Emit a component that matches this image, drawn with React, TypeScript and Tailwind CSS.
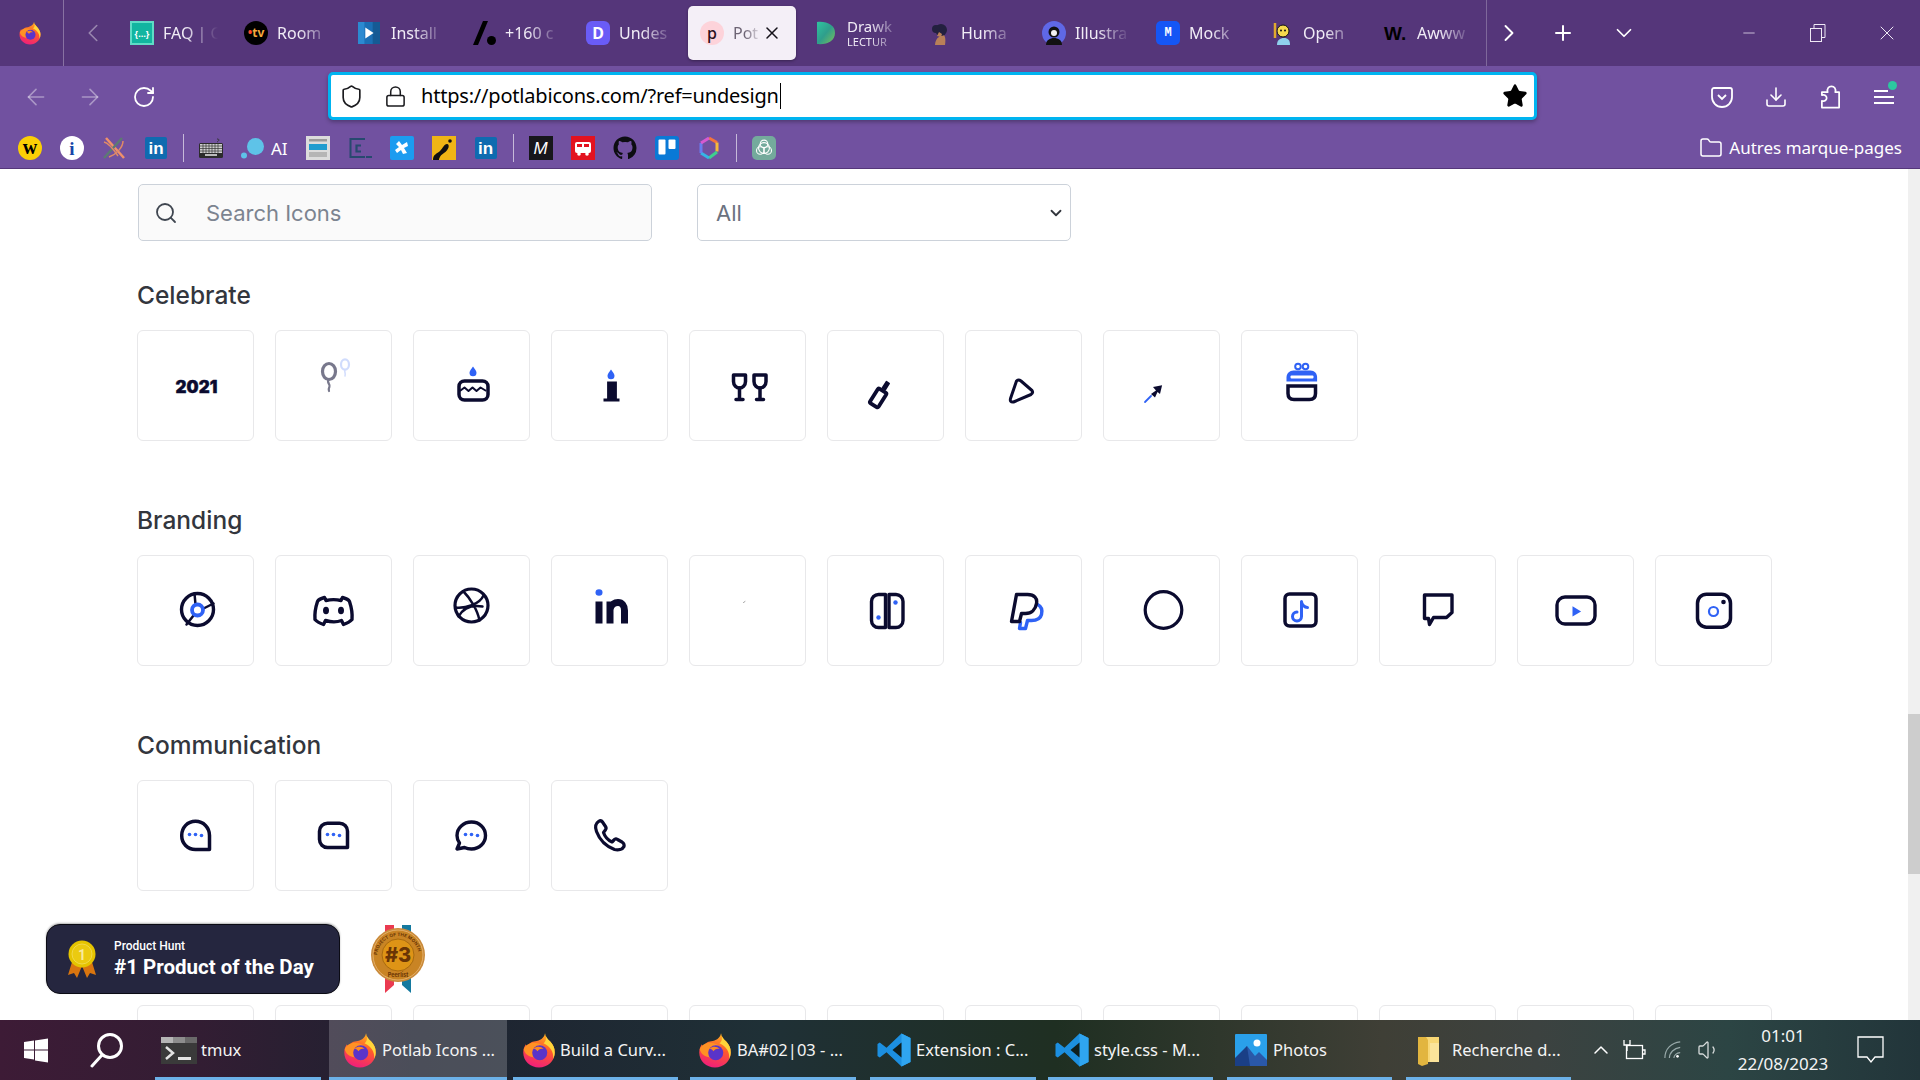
import React from "react";
import { ArrowLeft, ArrowRight, RotateCw, Shield, Lock, Star, Download, Folder, Search, ChevronLeft, ChevronRight, ChevronDown, ChevronUp, Plus, Minus, X, Volume1 } from "lucide-react";

const N = "#0b0b2f";
const B = "#2f62f5";

function Ff({ className }: { className: string }) {
  return (
    <svg viewBox="0 0 24 24" className={className}>
      <path d="M16 .8c.3 2.6 1.7 3.7 3.5 5.6 2 2.2 3 4.5 3 7.2 0 5.6-4.7 10-10.5 10S1.500 19.200 1.500 13.600c0-2 .6-3.900 1.700-5.500.2 1 .6 1.700 1.200 2.200C5 7.500 7 6.500 9.500 6.200 12.500 5.800 15.500 4 16 .8z" fill="url(#ffg)" />
      <path d="M16 .8c.3 2.600 1.700 3.700 3.500 5.600 2 2.200 3 4.500 3 7.200 0 1.500-.4 3-1 4.200.3-4.600-2-8.300-6.500-10.300C17 6 17 3.500 16 .8z" fill="#ffd53a" />
      <path d="M1.800 11.500C3 8.500 6 7 9 7.200c3 .2 5.500 1.500 7 3.300-3-1.200-5.500-.8-7 .5-1.600 1.500-1.700 4-.3 6C5 16.500 2.500 14.500 1.800 11.500z" fill="#ff9124" />
      <circle cx="12.500" cy="13.800" r="5" fill="#5a34c9" />
      <path d="M8.500 11c2-1.700 5-1.500 6.600.4-2-.5-3.400.2-4 1.500-.7-.9-1.600-1.600-2.600-1.900z" fill="#ff8a1e" />
    </svg>
  );
}

function Vs({ className }: { className: string }) {
  return (
    <svg viewBox="0 0 24 24" className={className}>
      <path d="M17 1l6 3v16l-6 3L7 13.500 2.500 17 1 16V8l1.500-1L7 10.500z" fill="#1c8fe0" />
      <path d="M17 1l6 3v16l-6 3z" fill="#2fa5f0" />
      <path d="M17 7l-6 5 6 5z" fill="#0f1f1f" />
    </svg>
  );
}

function Fav({ k }: { k: string }) {
  const cls = "w-6 h-6 shrink-0";
  if (k === "faq")
    return <div className="w-6 h-6 shrink-0 bg-[#12b5a0] border-2 border-[#5fdcc6] flex items-center justify-center text-white text-[9px] leading-none font-bold">{"{…}"}</div>;
  if (k === "tv")
    return (
      <div className="w-6 h-6 shrink-0 rounded-full bg-black flex items-center justify-center text-[12px] leading-none font-bold">
        <span className="text-[#ff4b2b]">•</span>
        <span className="text-[#f5a93c]">tv</span>
      </div>
    );
  if (k === "install")
    return (
      <svg viewBox="0 0 24 24" className="w-[22px] h-[22px] shrink-0 mr-[2px]">
        <rect width="24" height="24" fill="#1b6fb5" />
        <rect x="16" width="8" height="24" fill="#155a94" />
        <rect y="0" width="7" height="24" fill="#2b8ad1" />
        <path d="M8 6l9 6-9 6z" fill="#fff" />
      </svg>
    );
  if (k === "slash")
    return (
      <svg viewBox="0 0 24 24" className={cls}>
        <path d="M11 0h5L6 24H1z" fill="#000" />
        <circle cx="19.500" cy="19.500" r="4.500" fill="#000" />
      </svg>
    );
  if (k === "d")
    return <div className="w-6 h-6 shrink-0 rounded-[6px] bg-[#6a5cf6] flex items-center justify-center text-white text-[16px] leading-none font-bold">D</div>;
  if (k === "p")
    return <div className="w-6 h-6 shrink-0 rounded-full bg-[#fdd3da] flex items-center justify-center text-[#2a1020] text-[16px] leading-none font-medium">p</div>;
  if (k === "draw")
    return (
      <svg viewBox="0 0 24 24" className={cls}>
        <path d="M3 1c10-1 18 3 18 11s-8 12-18 11z" fill="url(#drawg)" />
      </svg>
    );
  if (k === "human")
    return (
      <svg viewBox="0 0 24 24" className={cls}>
        <path d="M14 13c3 1 4 4 3 11H7c0-4 2-7 4-8z" fill="#b98058" />
        <circle cx="13" cy="9" r="6" fill="#23203f" />
        <circle cx="8" cy="8" r="4" fill="#23203f" />
        <path d="M9 15l2-4 3 2-1 3z" fill="#b98058" />
      </svg>
    );
  if (k === "illu")
    return (
      <svg viewBox="0 0 24 24" className={cls}>
        <circle cx="12" cy="12" r="12" fill="#5f68e6" />
        <path d="M4 24c0-5 4-7 8-7s8 2 8 7z" fill="#111" />
        <circle cx="12" cy="11" r="5.500" fill="#111" />
        <circle cx="12" cy="12" r="3" fill="#f2f2f2" />
      </svg>
    );
  if (k === "mock")
    return <div className="w-6 h-6 shrink-0 rounded-[5px] bg-[#1556f5] flex items-center justify-center text-white text-[12px] leading-none font-bold font-['Liberation_Mono',monospace]">M</div>;
  if (k === "open")
    return (
      <svg viewBox="0 0 24 24" className={cls}>
        <path d="M7 24c0-5 3-7 7-7s6 2 6 7z" fill="#8fd0ec" />
        <circle cx="13" cy="10" r="6" fill="#f5d94e" stroke="#111" strokeWidth="1" />
        <path d="M5 2v15" stroke="#e0a92e" strokeWidth="2.500" />
        <circle cx="11" cy="9.500" r="1" fill="#111" />
        <circle cx="15" cy="9.500" r="1" fill="#111" />
      </svg>
    );
  return <div className="w-6 h-6 shrink-0 flex items-center text-black text-[19px] leading-none font-black font-['Liberation_Sans',sans-serif]">W.</div>;
}

const tabs = [
  { k: "faq", t: "FAQ | C" },
  { k: "tv", t: "Room" },
  { k: "install", t: "Install" },
  { k: "slash", t: "+160 c" },
  { k: "d", t: "Undes" },
  { k: "p", t: "Pot", active: true },
  { k: "draw", t: "Drawk", sub: "LECTUR" },
  { k: "human", t: "Huma" },
  { k: "illu", t: "Illustra" },
  { k: "mock", t: "Mock" },
  { k: "open", t: "Open" },
  { k: "w", t: "Awww" },
];

function Tab({ k, t, sub, active }: { k: string; t: string; sub?: string; active?: boolean }) {
  return (
    <div className="w-[114px] shrink-0 h-full py-[6px] pr-[6px]">
      <div className={`h-full rounded-[5px] pl-3 flex items-center gap-[9px] ${active ? "pr-[14px] bg-[#f4eff7] shadow-[0_1px_3px_rgba(0,0,0,0.35)]" : "pr-[8px]"}`}>
        <Fav k={k} />
        <div className={`flex-1 min-w-0 whitespace-nowrap [mask-image:linear-gradient(to_right,black_40%,transparent)] ${active ? "text-[#6d6474]" : "text-[#f1ecf6]"}`}>
          <div className={`${sub ? "text-[15px] leading-[17px]" : "text-[16px] leading-5"}`}>{t}</div>
          {sub && <div className="text-[11px] leading-[14px]">{sub}</div>}
        </div>
        {active && <X className="w-[20px] h-[20px] shrink-0 ml-[-9px] text-[#15121a]" strokeWidth={1.8} />}
      </div>
    </div>
  );
}

function BM({ k }: { k: string }) {
  const c = "w-6 h-6 shrink-0";
  switch (k) {
    case "wf":
      return <div className="w-6 h-6 shrink-0 rounded-full bg-[#fbcf05] flex items-center justify-center text-black text-[20px] leading-none font-black font-['Liberation_Serif',serif] pb-[3px]">w</div>;
    case "info":
      return <div className="w-6 h-6 shrink-0 rounded-full bg-white flex items-center justify-center text-[#1746a8] text-[19px] leading-none font-bold font-['Liberation_Serif',serif]">i</div>;
    case "x":
      return (
        <svg viewBox="0 0 24 24" className={c} fill="none">
          <path d="M4 2l18 20" stroke="#f0916a" strokeWidth="2.500" />
          <path d="M20 2L2 22" stroke="#5c7a73" strokeWidth="2.500" />
          <path d="M2 6c5 1 10 8 14 14M21 5c0 6-6 13-14 16" stroke="#e08a66" strokeWidth="1.500" />
        </svg>
      );
    case "in":
      return <div className="w-[22px] h-[22px] shrink-0 mx-px rounded-[2px] bg-[#0f6bb0] flex items-center justify-center text-white text-[17px] leading-none font-bold font-['Liberation_Sans',sans-serif]">in</div>;
    case "kbd":
      return (
        <svg viewBox="0 0 24 24" className={c}>
          <path d="M18 6c2-1 3-3 0-3" stroke="#333" strokeWidth="1" fill="none" />
          <rect y="7" width="24" height="15" rx="1.500" fill="#2c2c2c" />
          <rect x="1" y="8" width="22" height="9" fill="#cfcfcf" />
          <path d="M1 10h22M1 12.500h22M1 15h22M4 8v9M7 8v9M10 8v9M13 8v9M16 8v9M19 8v9" stroke="#333" strokeWidth=".7" />
          <rect x="6" y="18" width="12" height="2" fill="#bbb" />
        </svg>
      );
    case "ai":
      return (
        <div className="flex items-center gap-[6px] text-white text-[17px] leading-none">
          <svg viewBox="0 0 24 24" className={c}>
            <circle cx="14.500" cy="10.500" r="8.500" fill="#5ec3e8" />
            <circle cx="3" cy="19.500" r="3" fill="#5ec3e8" />
          </svg>
          <span>AI</span>
        </div>
      );
    case "news":
      return (
        <svg viewBox="0 0 24 24" className={c}>
          <rect width="24" height="24" fill="#dcdcdc" />
          <rect x="3" y="3" width="18" height="2.500" fill="#9a9a9a" />
          <rect x="3" y="8" width="18" height="6" fill="#1f9ccf" />
          <rect x="3" y="16" width="18" height="5" fill="#b5b5b5" />
        </svg>
      );
    case "c":
      return (
        <svg viewBox="0 0 24 24" className={c} fill="none">
          <path d="M17 3H2.500v18H17" stroke="#27496f" strokeWidth="2" />
          <path d="M13 9.500H8.500v6H13" stroke="#27496f" strokeWidth="2.200" />
          <path d="M18 21h6" stroke="#27496f" strokeWidth="2" />
        </svg>
      );
    case "conf":
      return (
        <svg viewBox="0 0 24 24" className={c}>
          <rect width="24" height="24" rx="2" fill="#1c9cf0" />
          <path d="M9 5l3 4 5-3 1 4-4 2 3 5-4 1-2-4-4 3-2-3 4-3-3-3z" fill="#fff" />
        </svg>
      );
    case "yel":
      return (
        <svg viewBox="0 0 24 24" className={c}>
          <rect width="24" height="24" fill="#f0b515" />
          <path d="M1 24c0-6 4-6 7-9s4-7 7-7 2 6-3 9-5 7-5 7z" fill="#111" />
          <circle cx="18" cy="5" r="1.800" fill="#111" />
        </svg>
      );
    case "m":
      return <div className="w-6 h-6 shrink-0 bg-[#17171c] flex items-center justify-center text-white text-[17px] leading-none italic font-['Liberation_Sans',sans-serif]">M</div>;
    case "bus":
      return (
        <svg viewBox="0 0 24 24" className={c}>
          <rect width="24" height="24" fill="#e3121f" />
          <rect x="4" y="6" width="16" height="11" rx="2" fill="#fff" />
          <rect x="6" y="8" width="5" height="3" fill="#e3121f" />
          <rect x="13" y="8" width="5" height="3" fill="#e3121f" />
          <circle cx="8" cy="18" r="1.800" fill="#fff" />
          <circle cx="16" cy="18" r="1.800" fill="#fff" />
        </svg>
      );
    case "gh":
      return (
        <svg viewBox="0 0 24 24" className={c}>
          <path fill="#0d0d12" d="M12 .5C5.600.5.500 5.600.500 12c0 5.100 3.300 9.400 7.900 10.900.6.100.8-.3.800-.6v-2c-3.200.7-3.900-1.500-3.900-1.500-.5-1.300-1.300-1.700-1.300-1.700-1-.7.100-.7.100-.7 1.200.1 1.800 1.200 1.800 1.200 1 1.800 2.700 1.300 3.400 1 .1-.8.400-1.300.7-1.600-2.600-.3-5.300-1.300-5.300-5.700 0-1.300.5-2.300 1.200-3.100-.1-.3-.5-1.500.1-3.100 0 0 1-.3 3.200 1.200a11 11 0 015.800 0c2.200-1.500 3.200-1.200 3.200-1.200.6 1.600.2 2.800.1 3.100.7.800 1.200 1.800 1.200 3.100 0 4.400-2.700 5.400-5.300 5.700.4.400.8 1.100.8 2.200v3.300c0 .3.200.7.800.6A11.500 11.500 0 0023.500 12C23.500 5.600 18.400.5 12 .5z" />
        </svg>
      );
    case "trello":
      return (
        <svg viewBox="0 0 24 24" className={c}>
          <rect width="24" height="24" rx="3" fill="#0a79d6" />
          <rect x="3.500" y="3.500" width="7" height="15" rx="1" fill="#fff" />
          <rect x="13.500" y="3.500" width="7" height="9.500" rx="1" fill="#fff" />
        </svg>
      );
    case "hex":
      return (
        <svg viewBox="0 0 24 24" className={c} fill="none" strokeWidth="3">
          <path d="M12 2l8 4.500" stroke="#f4743b" />
          <path d="M20 6.500v9" stroke="#f6b93b" />
          <path d="M20 16l-8 6" stroke="#3ecf8e" />
          <path d="M12 22l-8-5" stroke="#35b6e6" />
          <path d="M4 17V7" stroke="#6a7cf0" />
          <path d="M4 7l8-5" stroke="#d65ad1" />
        </svg>
      );
    default:
      return (
        <div className="w-6 h-6 shrink-0 rounded-[5px] bg-[#74aa9c] flex items-center justify-center">
          <svg viewBox="0 0 24 24" className="w-5 h-5" fill="none" stroke="#fff" strokeWidth="1.300">
            <circle cx="12" cy="7" r="4.500" />
            <circle cx="7.500" cy="15" r="4.500" />
            <circle cx="16.500" cy="15" r="4.500" />
            <circle cx="12" cy="12" r="6.500" />
          </svg>
        </div>
      );
  }
}

function Sep() {
  return <div className="w-px h-[28px] shrink-0 bg-white/60 mx-[-3px]" />;
}

function Ic({ children }: { children?: React.ReactNode }) {
  return (
    <svg viewBox="28.5 25.500 60 60" className="w-[60px] h-[60px]" fill="none" strokeLinejoin="round" strokeLinecap="round">
      {children}
    </svg>
  );
}

const celebrate = [
  <text key="0" x="59" y="62.500" textAnchor="middle" fill={N} fontSize="17" fontWeight="900" fontFamily="Inter, sans-serif" stroke={N} strokeWidth=".4">2021</text>,
  <g key="1">
    <g opacity=".55" stroke={N}>
      <ellipse cx="53.500" cy="41" rx="6.500" ry="8" strokeWidth="3.200" />
      <path d="M53 49c-2 3 2 5 1 7s-1 3-.5 4.500" strokeWidth="2.200" />
    </g>
    <g opacity=".22" stroke={B}>
      <ellipse cx="69.500" cy="34" rx="4" ry="5.200" strokeWidth="2.200" />
      <path d="M69.500 39.500c-1 2 1 3 0 6" strokeWidth="1.500" />
    </g>
  </g>,
  <g key="2">
    <rect x="45.500" y="50.500" width="29" height="19" rx="5.500" stroke={N} strokeWidth="3.500" />
    <path d="M47 60l4-3 4 3.500 4-3.500 4 3.500 4-3.500 5 3" stroke={N} strokeWidth="2" />
    <path d="M59.500 36c-2 3-3.500 4.500-3.500 6.200a3.500 3.500 0 007 0c0-1.700-1.500-3.200-3.500-6.200z" fill={B} />
  </g>,
  <g key="3">
    <rect x="55.600" y="51" width="9.800" height="18" fill={N} />
    <rect x="52" y="68" width="16" height="3" fill={N} />
    <path d="M59.500 39c-2 3-3.500 4.500-3.500 6.200a3.500 3.500 0 007 0c0-1.700-1.500-3.200-3.500-6.200z" fill={B} />
  </g>,
  <g key="4" stroke={N} strokeWidth="3.500">
    <path d="M44 44.500h12V51c0 4-3 6.500-6 6.500s-6-2.500-6-6.500z" strokeLinecap="butt" />
    <path d="M50 57.500V68M46.500 69h7" />
    <path d="M64.500 44.500h12V51c0 4-3 6.500-6 6.500s-6-2.500-6-6.500z" strokeLinecap="butt" />
    <path d="M70.500 57.500V68M67 69h7" />
  </g>,
  <g key="5" transform="rotate(32 52.500 64.500)">
    <rect x="47.500" y="59.500" width="10" height="17" rx="1.500" stroke={N} strokeWidth="3.800" />
    <rect x="50" y="49" width="5" height="9" rx="1" fill={N} />
  </g>,
  <path key="6" d="M51 50.500Q53 48.500 55.500 50.500L66.500 60Q68 62.500 65.500 64L48 71.500Q44 72 45 68Z" stroke={N} strokeWidth="3" />,
  <g key="7">
    <path d="M58.600 54.700L56.500 63.500 54 61.500 51.500 67 47.500 63.500 52.500 60 49.500 56.500Z" fill={N} />
    <path d="M47.500 65.500L41.500 71.500" stroke={B} strokeWidth="1.800" />
  </g>,
  <g key="8">
    <circle cx="56.500" cy="36" r="2.800" stroke={B} strokeWidth="2" />
    <circle cx="64" cy="36" r="2.800" stroke={B} strokeWidth="2" />
    <path d="M52 40h17c4 0 6.600 3 6.600 7v4H45v-4c0-4 3-7 7-7z" fill={B} />
    <rect x="49" y="45" width="23" height="3" rx="1" fill="#fff" />
    <path d="M46.500 55.500H74V63c0 4-2 6-6 6H52.500c-4 0-6-2-6-6z" stroke={N} strokeWidth="3.500" strokeLinejoin="miter" />
  </g>,
];

const branding = [
  <g key="0" stroke={N} strokeWidth="3.400">
    <circle cx="60" cy="54" r="16" />
    <path d="M57 38l1 11M66 53l10-5M56 60l-7 9" strokeWidth="2.500" />
    <circle cx="60" cy="54.500" r="5.500" stroke={B} strokeWidth="3.800" />
  </g>,
  <g key="1">
    <path d="M49 42C45 43 43 44 42 46 40 52 39 58 39.500 64 42 67 45 68 48 69L50 65C55 66.500 62 66.500 66 65L68 69C71 68 74 67 76.500 64 77 58 76 52 74 46 73 44 71 43 67 42L65.500 45C61 44 55 44 50.500 45Z" stroke={N} strokeWidth="3.400" />
    <ellipse cx="50.500" cy="55" rx="3" ry="3.800" fill={N} />
    <ellipse cx="65.500" cy="55" rx="3" ry="3.800" fill={N} />
  </g>,
  <g key="2" stroke={N} strokeWidth="3.200">
    <circle cx="58" cy="50" r="16.500" />
    <path d="M50 36C56 42 64 54 66 65M42 52c10 1 24-3 28-12M45 61c4-7 12-12 24-10" strokeWidth="2.500" />
  </g>,
  <g key="3">
    <ellipse cx="47.500" cy="37" rx="3.500" ry="3.200" fill={B} />
    <rect x="44" y="46" width="7" height="22" fill={N} />
    <path d="M58.500 68V46M58.500 54c1-5 5-7 8-7 4 0 6.500 3 6.500 8v13" stroke={N} strokeWidth="7" strokeLinecap="butt" strokeLinejoin="miter" />
  </g>,
  <path key="4" d="M54 47l1.500-1" stroke="#888" strokeWidth=".8" />,
  <g key="5">
    <path d="M58 39h-7a7 7 0 00-7 7v19a7 7 0 007 7h7z" stroke={N} strokeWidth="3.400" />
    <path d="M61.500 39h7a7 7 0 017 7v19a7 7 0 01-7 7h-7z" stroke={N} strokeWidth="3.400" />
    <circle cx="68" cy="47" r="2.200" fill={B} />
    <circle cx="51" cy="62" r="2.200" fill={B} />
  </g>,
  <g key="6" strokeWidth="3.400">
    <path d="M72 49c4 2 5 6 4 10-1 4-5 6-10 6h-4l-2 8h-6l1-6" stroke={B} />
    <path d="M51 39h11c7 0 10 4 9 9-1 6-5 10-11 10h-4l-2 8h-8z" stroke={N} fill="#fff" />
  </g>,
  <ellipse key="7" cx="60" cy="54.500" rx="18.300" ry="18.300" stroke={N} strokeWidth="3.200" />,
  <g key="8">
    <rect x="43.500" y="38.500" width="31" height="32" rx="4.500" stroke={N} strokeWidth="3.500" />
    <path d="M60 46v15a4.500 4.500 0 11-4.500-4.500M60 46c0 3 3 6 6 6" stroke={B} strokeWidth="3" />
  </g>,
  <path key="9" d="M45 39.500H72.500V57L67 62H54L50 69 49 63H45Z" stroke={N} strokeWidth="3.400" />,
  <g key="10">
    <rect x="39.500" y="41.500" width="38" height="27" rx="8" stroke={N} strokeWidth="3.400" />
    <path d="M55 50.700L63.600 56 55 61Z" fill={B} />
  </g>,
  <g key="11">
    <rect x="42" y="38.700" width="33" height="33" rx="9" stroke={N} strokeWidth="3.500" />
    <circle cx="58" cy="56" r="4.500" stroke={B} strokeWidth="2.200" />
    <circle cx="68" cy="46.500" r="2.300" fill={N} />
  </g>,
];

const dots = (
  <g fill={B}>
    <circle cx="52" cy="54" r="1.800" />
    <circle cx="58" cy="54" r="1.800" />
    <circle cx="64" cy="55" r="1.800" />
  </g>
);

const comm = [
  <g key="0">
    <path d="M58 40.800C50 40.800 44.200 47 44.200 55S50 69 58 69H72V55C72 47 66 40.800 58 40.800Z" stroke={N} strokeWidth="3.500" />
    {dots}
  </g>,
  <g key="1">
    <path d="M52 42.700H64a8 8 0 018 8V67H52a8 8 0 01-8-8V50.700a8 8 0 018-8Z" stroke={N} strokeWidth="3.500" />
    {dots}
  </g>,
  <g key="2">
    <path d="M58 41.500C50 41.500 43.500 47.500 43.500 55 43.500 58 44.500 60.500 46 62.500L43.500 68.500 51 67C53 68 55.500 68.500 58 68.500 66 68.500 72 62.500 72 55 72 47.500 66 41.500 58 41.500Z" stroke={N} strokeWidth="3.400" />
    {dots}
  </g>,
  <path key="3" d="M47 41C44 43 43.500 47 45 51 48 59 55 66 63 69 67 70 71 69 72.500 66 73 64 72 62.500 70.500 61.500L66 59C64.500 58 63 58.500 62 60L60.500 61.500C56 59.500 53.500 56.500 52 52L53.500 50C54.500 49 55 47.500 54 46L51 41.500C50 40 48.500 40 47 41Z" stroke={N} strokeWidth="3.200" />,
];

function Card({ children }: { children?: React.ReactNode }) {
  return <div className="w-[117px] h-[111px] shrink-0 bg-white border border-[#e8e8ea] rounded-[6px] flex items-center justify-center">{children}</div>;
}

function Section({ title, icons }: { title: string; icons: React.ReactNode[] }) {
  return (
    <section className="h-[225px]">
      <h2 className="h-9 flex items-center text-[24.5px] font-medium text-[#33363d]">{title}</h2>
      <div className="mt-[17px] flex gap-[21px]">
        {icons.map((ic, i) => (
          <Card key={i}>
            <Ic>{ic}</Ic>
          </Card>
        ))}
      </div>
    </section>
  );
}

const taskItems = [
  { id: "t", label: "tmux", ml: 26, w: 166, pl: 6, gap: 4 },
  { id: "f", label: "Potlab Icons ...", ml: 8, w: 178, pl: 13, gap: 4 },
  { id: "f", label: "Build a Curv...", ml: 6, w: 165, pl: 8, gap: 3 },
  { id: "f", label: "BA#02|03 - ...", ml: 12, w: 166, pl: 7, gap: 4 },
  { id: "v", label: "Extension : C...", ml: 14, w: 166, pl: 6, gap: 4 },
  { id: "v", label: "style.css - M...", ml: 12, w: 165, pl: 6, gap: 4 },
  { id: "p", label: "Photos", ml: 14, w: 165, pl: 8, gap: 6 },
  { id: "d", label: "Recherche d...", ml: 14, w: 165, pl: 12, gap: 13 },
];

function TaskIcon({ id }: { id: string }) {
  if (id === "t")
    return (
      <svg viewBox="0 0 36 27" className="w-9 h-[27px] shrink-0">
        <rect width="36" height="27" fill="#3a3a3a" />
        <rect width="12" height="6" fill="#b5b5b5" />
        <rect x="12" width="12" height="6" fill="#8d8d8d" />
        <rect x="24" width="12" height="6" fill="#6a6a6a" />
        <path d="M5 10l7 6-7 6" stroke="#e4e4e4" strokeWidth="2.500" fill="none" />
        <rect x="17" y="20" width="13" height="3" fill="#e4e4e4" />
      </svg>
    );
  if (id === "f") return <Ff className="w-[36px] h-[38px] shrink-0" />;
  if (id === "v") return <Vs className="w-9 h-9 shrink-0" />;
  if (id === "p")
    return (
      <svg viewBox="0 0 32 32" className="w-8 h-8 shrink-0">
        <rect width="32" height="32" rx="1" fill="#2aa0ea" />
        <circle cx="22" cy="9" r="3.500" fill="#fff" />
        <path d="M0 28l12-16 8 10 4-4 8 8v6H0z" fill="#2a58a8" />
        <path d="M0 32V24l12-12 3 20z" fill="#1a3f86" />
      </svg>
    );
  return (
    <svg viewBox="0 0 21 31" className="w-[21px] h-[31px] shrink-0">
      <path d="M0 2h21v25H3l-3 0z" fill="#f8d775" />
      <path d="M0 2h8l2 3v24l-6 2-4-2z" fill="#e2b53f" />
      <path d="M12 8h9v19h-9z" fill="#fbe39a" />
    </svg>
  );
}

export default function App() {
  return (
    <div className="w-[1920px] h-[1080px] flex flex-col overflow-hidden bg-white font-['Noto_Sans',sans-serif]">
      <svg width="0" height="0" className="absolute">
        <defs>
          <linearGradient id="ffg" x1=".7" y1="0" x2=".4" y2="1">
            <stop offset="0" stopColor="#ffb31f" />
            <stop offset=".45" stopColor="#ff5a2c" />
            <stop offset="1" stopColor="#f01f7a" />
          </linearGradient>
          <linearGradient id="drawg" x1="0" y1="0" x2="1" y2="1">
            <stop offset="0" stopColor="#2fc4a0" />
            <stop offset=".5" stopColor="#2f9e8c" />
            <stop offset="1" stopColor="#7ac05a" />
          </linearGradient>
        </defs>
      </svg>

      {/* Tab strip */}
      <div className="h-[66px] shrink-0 bg-[#55367a] flex items-stretch">
        <div className="w-[64px] shrink-0 border-r border-white/30 flex items-center justify-center pr-[4px]">
          <Ff className="w-6 h-6" />
        </div>
        <div className="w-[54px] shrink-0 flex items-center justify-center pl-1">
          <ChevronLeft className="w-[30px] h-[30px] text-white/40" strokeWidth={1.3} />
        </div>
        {tabs.map((t) => (
          <Tab key={t.t} {...t} />
        ))}
        <div className="border-l border-white/25 flex items-center">
          <ChevronRight className="w-[28px] h-[28px] text-white ml-[8px]" strokeWidth={1.6} />
          <Plus className="w-[24px] h-[24px] text-white ml-[28px]" strokeWidth={2} />
          <ChevronDown className="w-[26px] h-[26px] text-white ml-[36px]" strokeWidth={1.6} />
        </div>
        <div className="flex-1 flex items-center justify-end text-[#efe9f5]">
          <Minus className="w-[18px] h-[18px] mr-[52px]" strokeWidth={1} />
          <svg viewBox="0 0 16 18" className="w-[16px] h-[18px] mr-[49px]" fill="none" stroke="currentColor" strokeWidth="1">
            <rect x=".5" y="4.500" width="11" height="13" />
            <path d="M4 4.500V.5h11v13h-3.500" />
          </svg>
          <X className="w-[24px] h-[24px] mr-[21px]" strokeWidth={1} />
        </div>
      </div>

      {/* Toolbar */}
      <div className="h-[62px] shrink-0 bg-[#7151a0] flex items-center">
        <ArrowLeft className="w-[26px] h-[26px] ml-[23px] text-white/40" strokeWidth={1.5} />
        <ArrowRight className="w-[26px] h-[26px] ml-[28px] text-white/40" strokeWidth={1.5} />
        <RotateCw className="w-[24px] h-[24px] ml-[29px] text-white" strokeWidth={1.8} />
        <div className="w-[1209px] h-[48px] ml-[172px] bg-white border-[3px] border-[#00b4f0] rounded-[5px] flex items-center shadow-[0_2px_4px_rgba(0,0,0,0.3)] mt-[-2px]">
          <Shield className="w-[25px] h-[25px] ml-[8px] text-[#1b1b1f]" strokeWidth={1.6} />
          <Lock className="w-[23px] h-[25px] ml-[20px] text-[#1b1b1f]" strokeWidth={1.6} />
          <span className="ml-[14px] text-[20px] leading-none text-black tracking-[-0.2px] border-r border-black pr-px h-[26px] flex items-center">https://potlabicons.com/?ref=undesign</span>
          <Star className="w-[26px] h-[26px] ml-auto mr-[6px] text-black" fill="currentColor" strokeWidth={1.5} />
        </div>
        <svg viewBox="0 0 22 24" className="w-[22px] h-[24px] ml-[174px]" fill="none" stroke="#fff" strokeWidth="1.800">
          <path d="M3 3h16a2 2 0 012 2v7a10 10 0 01-20 0V5a2 2 0 012-2z" />
          <path d="M7 10l4 4 4-4" />
        </svg>
        <Download className="w-[24px] h-[24px] ml-[31px] text-white" strokeWidth={1.6} />
        <svg viewBox="0 0 24 26" className="w-[23px] h-[26px] ml-[31px]" fill="none" stroke="#fff" strokeWidth="1.800" strokeLinejoin="round">
          <path d="M3 24V17c3 1 5-1 5-3s-2-4-5-3V8h6c-1-4 1-6 4-6s5 2 4 6h4v16z" />
        </svg>
        <div className="relative ml-[32px] w-[20px] flex flex-col gap-[4px]">
          <div className="h-[2px] w-[14px] bg-white" />
          <div className="h-[2px] bg-white" />
          <div className="h-[2px] bg-white" />
          <div className="absolute w-[9px] h-[9px] rounded-full bg-[#2cc7a0] right-[-3px] top-[-9px]" />
        </div>
      </div>

      {/* Bookmarks */}
      <div className="h-[41px] shrink-0 bg-[#7151a0] border-b border-[#55367a] flex items-center gap-[18px] pl-[18px]">
        <BM k="wf" />
        <BM k="info" />
        <BM k="x" />
        <BM k="in" />
        <Sep />
        <BM k="kbd" />
        <BM k="ai" />
        <BM k="news" />
        <BM k="c" />
        <BM k="conf" />
        <BM k="yel" />
        <BM k="in" />
        <Sep />
        <BM k="m" />
        <BM k="bus" />
        <BM k="gh" />
        <BM k="trello" />
        <BM k="hex" />
        <Sep />
        <BM k="gpt" />
        <div className="ml-auto mr-[18px] flex items-center gap-[6px] text-white text-[17px]">
          <Folder className="w-[24px] h-[24px]" strokeWidth={1.5} />
          <span>Autres marque-pages</span>
        </div>
      </div>

      {/* Page */}
      <div className="relative flex-1 min-h-0 overflow-hidden bg-white font-['Inter',sans-serif]">
        <div className="pt-[15px] pl-[137px]">
          <div className="flex">
            <div className="ml-px w-[514px] h-[57px] bg-[#fafafa] border border-[#ccd2da] rounded-[5px] flex items-center">
              <Search className="w-[24px] h-[24px] ml-[15px] text-[#3f4650]" strokeWidth={1.8} />
              <span className="ml-[28px] pt-[2px] text-[22px] text-[#7c8490]">Search Icons</span>
            </div>
            <div className="ml-[45px] w-[374px] h-[57px] bg-white border border-[#ccd2da] rounded-[5px] flex items-center">
              <span className="ml-[18px] pt-[2px] text-[22px] text-[#6b7280]">All</span>
              <ChevronDown className="w-[18px] h-[18px] ml-auto mr-[5px] text-[#33363d]" strokeWidth={2.4} />
            </div>
          </div>
          <div className="mt-9">
            <Section title="Celebrate" icons={celebrate} />
            <Section title="Branding" icons={branding} />
            <Section title="Communication" icons={comm} />
            <div className="flex gap-[21px] mt-[53px]">
              {Array.from({ length: 12 }).map((_, i) => (
                <Card key={i} />
              ))}
            </div>
          </div>
        </div>

        {/* Floating badges */}
        <div className="absolute left-[46px] top-[755px] flex items-center">
          <div className="w-[294px] h-[70px] bg-[#25263f] border border-[#0b0b14] rounded-[14px] flex items-center shadow-[0_-1px_2px_rgba(0,0,0,0.3)] font-['Roboto',sans-serif] text-white">
            <svg viewBox="0 0 28 38" className="w-[28px] h-[38px] ml-[21px] shrink-0">
              <path d="M4 22L0 35l6-2 3 5 5-12z" fill="#d9750f" />
              <path d="M24 22l4 13-6-2-3 5-5-12z" fill="#d9750f" />
              <circle cx="14" cy="14" r="13.500" fill="#e5c400" />
              <circle cx="14" cy="14" r="10" fill="#ebca10" stroke="#f1d84a" />
              <text x="14" y="19.500" textAnchor="middle" fontSize="14" fontWeight="700" fill="#f7e9a0" fontFamily="Roboto, sans-serif">1</text>
            </svg>
            <div className="ml-[18px]">
              <div className="text-[12px] leading-[15px] font-medium">Product Hunt</div>
              <div className="text-[20.500px] leading-[26px] font-bold">#1 Product of the Day</div>
            </div>
          </div>
          <svg viewBox="0 0 54 68" className="w-[54px] h-[68px] ml-[31px]">
            <path d="M14 0h9v60l-9 8z" fill="#ea3a50" />
            <path d="M31 0h9v68l-9-8z" fill="#14799f" />
            <circle cx="27" cy="30" r="27" fill="#c98a3a" />
            <circle cx="27" cy="30" r="25" fill="#c98424" stroke="#e3ad66" />
            <circle cx="27" cy="30" r="16" fill="#de9416" stroke="#a86a10" />
            <text x="27" y="37" textAnchor="middle" fontSize="20" fontWeight="800" fill="#6a3505" fontFamily="Inter, sans-serif">#3</text>
            <path id="arc3" d="M6 32a21 21 0 0142 0" fill="none" />
            <text fontSize="4.600" fontWeight="700" fill="#6a3505" fontFamily="Inter, sans-serif">
              <textPath href="#arc3" startOffset="2">PROJECT OF THE MONTH</textPath>
            </text>
            <text x="27" y="52" textAnchor="middle" fontSize="5.500" fontWeight="700" fill="#6a3505" fontFamily="Inter, sans-serif">Peerlist</text>
          </svg>
        </div>

        {/* Scrollbar */}
        <div className="absolute right-0 top-0 bottom-0 w-3 bg-[#f0f0f0]">
          <div className="absolute left-0 right-0 top-[545px] h-[160px] bg-[#cdcdcd]" />
        </div>
      </div>

      {/* Taskbar */}
      <div className="h-[60px] shrink-0 flex items-stretch text-white bg-[linear-gradient(90deg,#3d1b36_0%,#331d33_10%,#1e2230_22%,#1f3036_40%,#1f2f22_55%,#3f3f36_72%,#3c4240_80%,#2c4544_90%,#22353a_100%)]">
        <div className="w-[89px] shrink-0 flex items-center pl-[24px]">
          <svg viewBox="0 0 24 24" className="w-6 h-[25px]" fill="#fff">
            <path d="M0 3.500l10-1.400V11H0zM11 2l13-2v11H11zM0 12h10v9L0 19.500zM11 12h13v12l-13-2z" />
          </svg>
        </div>
        <div className="w-[40px] shrink-0 flex items-center">
          <svg viewBox="0 0 36 36" className="w-[36px] h-[36px]" fill="none" stroke="#fff" strokeWidth="3">
            <circle cx="21" cy="14" r="11.500" />
            <path d="M13 23L3 34" strokeLinecap="round" />
          </svg>
        </div>
        {taskItems.map((it) => (
          <div
            key={it.label}
            className={`shrink-0 flex items-center pt-[3px] border-b-[3px] border-[#6cb1e8] ${it.label.startsWith("Potlab") ? "bg-white/20" : ""}`}
            style={{ marginLeft: it.ml, width: it.w, paddingLeft: it.pl, gap: it.gap }}
          >
            <TaskIcon id={it.id} />
            <span className="text-[16.500px] whitespace-nowrap text-[#f4f4f4]">{it.label}</span>
          </div>
        ))}
        <div className="flex items-center">
          <ChevronUp className="w-[24px] h-[24px] ml-[18px]" strokeWidth={1.5} />
          <svg viewBox="0 0 24 22" className="w-[24px] h-[22px] ml-[9px]" fill="none" stroke="#fff" strokeWidth="1.300">
            <rect x="4.500" y="6.500" width="16" height="13" />
            <path d="M21 11h2v4h-2M2 1v5h6V1M5 6v6" />
          </svg>
          <svg viewBox="0 0 20 22" className="w-[18px] h-[22px] ml-[18px]" fill="none" stroke="#9aa" strokeWidth="1.300">
            <path d="M1 20C1 10 8 3 18 2M6 20c0-6 5-11 12-12M11 20c0-3 3-6 7-6" />
            <circle cx="15" cy="18" r="1.500" fill="#fff" stroke="none" />
          </svg>
          <Volume1 className="w-[24px] h-[24px] ml-[15px] text-[#d8dcdc]" strokeWidth={1.3} />
          <div className="w-[96px] ml-[14px] flex flex-col items-center text-[17px] leading-[28px] text-[#f4f4f4]">
            <span>01:01</span>
            <span>22/08/2023</span>
          </div>
          <svg viewBox="0 0 27 28" className="w-[27px] h-[28px] ml-[26px]" fill="none" stroke="#fff" strokeWidth="1.300">
            <path d="M1 1h25v20H18l-4 5-4-5H1z" />
          </svg>
        </div>
      </div>
    </div>
  );
}
